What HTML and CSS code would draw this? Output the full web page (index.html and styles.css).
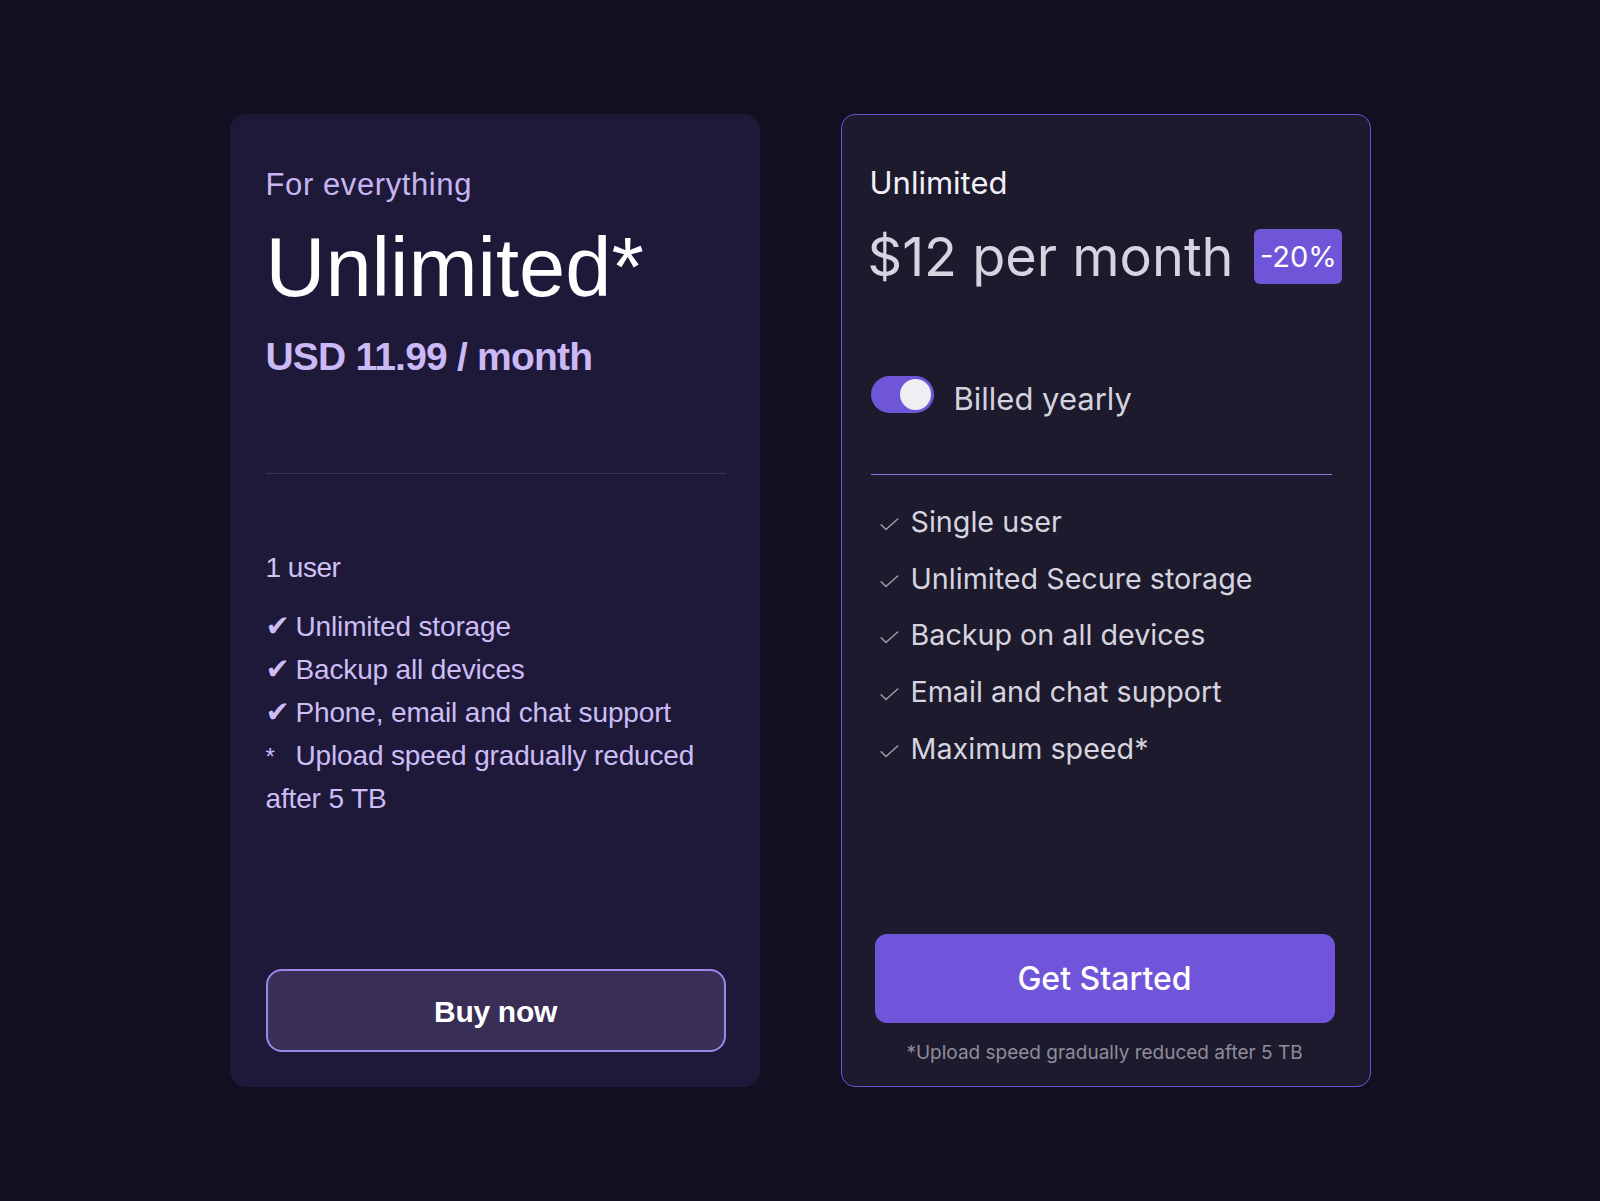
FILE: index.html
```html
<!DOCTYPE html>
<html lang="en">
<head>
<meta charset="utf-8">
<title>Pricing</title>
<link rel="stylesheet" href="styles.css">
</head>
<body>
<main class="plans">
  <section class="card card-classic">
    <p class="eyebrow">For everything</p>
    <h2 class="plan-title">Unlimited*</h2>
    <p class="plan-price">USD 11.99 / month</p>
    <hr class="rule-classic">
    <p class="users">1 user</p>
    <ul class="feat-classic">
      <li><span class="mark">✔</span>Unlimited storage</li>
      <li><span class="mark">✔</span>Backup all devices</li>
      <li><span class="mark">✔</span>Phone, email and chat support</li>
      <li><span class="mark mark-star">*</span><span>Upload speed gradually reduced</span><br><span>after 5 TB</span></li>
    </ul>
    <button class="btn-buy" type="button">Buy now</button>
  </section>

  <section class="card card-new">
    <p class="new-name">Unlimited</p>
    <div class="price-row">
      <span class="new-price">$12 per month</span>
      <span class="badge">-20%</span>
    </div>
    <div class="billing">
      <span class="toggle"><span class="knob"></span></span>
      <span class="billing-label">Billed yearly</span>
    </div>
    <hr class="rule-new">
    <ul class="feat-new">
      <li><svg class="tick" viewBox="0 0 20 14" aria-hidden="true"><path d="M1 7.2 L6.2 12.4 L18.8 1" /></svg>Single user</li>
      <li><svg class="tick" viewBox="0 0 20 14" aria-hidden="true"><path d="M1 7.2 L6.2 12.4 L18.8 1" /></svg>Unlimited Secure storage</li>
      <li><svg class="tick" viewBox="0 0 20 14" aria-hidden="true"><path d="M1 7.2 L6.2 12.4 L18.8 1" /></svg>Backup on all devices</li>
      <li><svg class="tick" viewBox="0 0 20 14" aria-hidden="true"><path d="M1 7.2 L6.2 12.4 L18.8 1" /></svg>Email and chat support</li>
      <li><svg class="tick" viewBox="0 0 20 14" aria-hidden="true"><path d="M1 7.2 L6.2 12.4 L18.8 1" /></svg>Maximum speed*</li>
    </ul>
    <button class="btn-start" type="button">Get Started</button>
    <p class="footnote">*Upload speed gradually reduced after 5 TB</p>
  </section>
</main>
</body>
</html>
```

FILE: styles.css
```css
* { box-sizing: border-box; }

html, body {
  margin: 0;
  padding: 0;
  background: #110f20;
}

body {
  width: 1600px;
  height: 1201px;
  overflow: hidden;
}

.plans {
  display: flex;
  justify-content: center;
  align-items: flex-start;
  gap: 81px;
  padding-top: 114px;
}

.card {
  width: 530px;
  height: 973px;
  display: flex;
  flex-direction: column;
}

/* ---------- left (classic) card ---------- */
.card-classic {
  background: #1e1839;
  border-radius: 16px;
  padding: 53px 34px 35px 36px;
  font-family: "Liberation Sans", Arial, sans-serif;
  color: #cdbdf5;
}

.eyebrow {
  margin: 0;
  font-size: 31px;
  line-height: 36px;
  letter-spacing: 0.6px;
  color: #c6b5f1;
}

.plan-title {
  margin: 20px 0 0;
  font-size: 83px;
  line-height: 90px;
  font-weight: 400;
  color: #ffffff;
}

.plan-price {
  margin: 21px 0 0;
  font-size: 39px;
  line-height: 46px;
  font-weight: 700;
  letter-spacing: -0.8px;
  color: #cbb9f6;
}

.rule-classic {
  margin: 93px 0 0;
  border: 0;
  height: 1px;
  background: #3a3358;
}

.users {
  margin: 72px 0 0;
  font-size: 28px;
  line-height: 43px;
  letter-spacing: -0.5px;
  color: #cfc2f2;
}

.feat-classic {
  list-style: none;
  margin: 16px 0 0;
  padding: 0;
  font-size: 28px;
  line-height: 43px;
  letter-spacing: -0.15px;
  color: #cdbdf5;
}

.mark {
  display: inline-block;
  width: 30px;
  line-height: 1;
  font-family: "DejaVu Sans", sans-serif;
  font-size: 29px;
}

.mark-star {
  font-family: "Liberation Sans", Arial, sans-serif;
  font-size: 24px;
}

.btn-buy {
  margin-top: auto;
  width: 460px;
  height: 83px;
  border: 2px solid #9c88e8;
  border-radius: 16px;
  background: #382e56;
  color: #ffffff;
  font-family: "Liberation Sans", Arial, sans-serif;
  font-size: 30px;
  font-weight: 700;
  letter-spacing: -0.3px;
  padding-top: 3px;
}

/* ---------- right (new) card ---------- */
.card-new {
  background: #1d1a2e;
  border: 1px solid #6a55d6;
  border-radius: 14px;
  padding: 49px 36px 22px 28px;
  font-family: Inter, "Noto Sans", sans-serif;
  color: #d4d2dc;
}

.new-name {
  margin: 0;
  font-size: 31px;
  line-height: 38px;
  color: #f2f0f7;
}

.price-row {
  margin: 23px 0 0 -2px;
  display: flex;
  align-items: center;
  gap: 21px;
  white-space: nowrap;
}

.new-price {
  font-size: 54px;
  line-height: 64px;
  color: #d6d4de;
}

.badge {
  height: 55px;
  padding: 0 5.5px;
  display: inline-flex;
  align-items: center;
  border-radius: 6px;
  background: #6f56d9;
  color: #ffffff;
  font-size: 29px;
  margin-top: -1px;
}

.billing {
  margin-top: 87px;
  display: flex;
  align-items: flex-start;
  gap: 20px;
  padding-left: 1px;
}

.toggle {
  width: 63px;
  height: 37px;
  border-radius: 19px;
  background: #6f56d9;
  display: flex;
  align-items: center;
  justify-content: flex-end;
  padding-right: 3px;
}

.knob {
  width: 31px;
  height: 31px;
  border-radius: 50%;
  background: #efeff3;
}

.billing-label {
  margin-top: 3px;
  font-size: 31px;
  line-height: 40px;
  color: #d4d2dc;
}

.rule-new {
  margin: 55px 0 0 1px;
  width: 461px;
  border: 0;
  height: 1px;
  background: #8a78dc;
}

.feat-new {
  list-style: none;
  margin: 19px 0 0;
  padding: 0;
  font-size: 28.7px;
  line-height: 56.7px;
  color: #d6d4de;
}

.feat-new li {
  display: flex;
  align-items: baseline;
}

.tick {
  width: 19px;
  height: 13px;
  margin: 0 12px 0 10px;
  fill: none;
  stroke: #a09eab;
  stroke-width: 1.6;
  stroke-linecap: round;
  stroke-linejoin: round;
  position: relative;
  top: -1px;
  flex: none;
}

.btn-start {
  margin: auto 0 0 5px;
  width: 460px;
  height: 89px;
  border: 0;
  border-radius: 12px;
  background: #7055db;
  color: #ffffff;
  font-family: Inter, "Noto Sans", sans-serif;
  font-size: 32px;
  font-weight: 500;
}

.footnote {
  margin: 19px 0 0 5px;
  width: 460px;
  text-align: center;
  font-size: 19px;
  line-height: 22px;
  color: #8f8d9a;
}
```
